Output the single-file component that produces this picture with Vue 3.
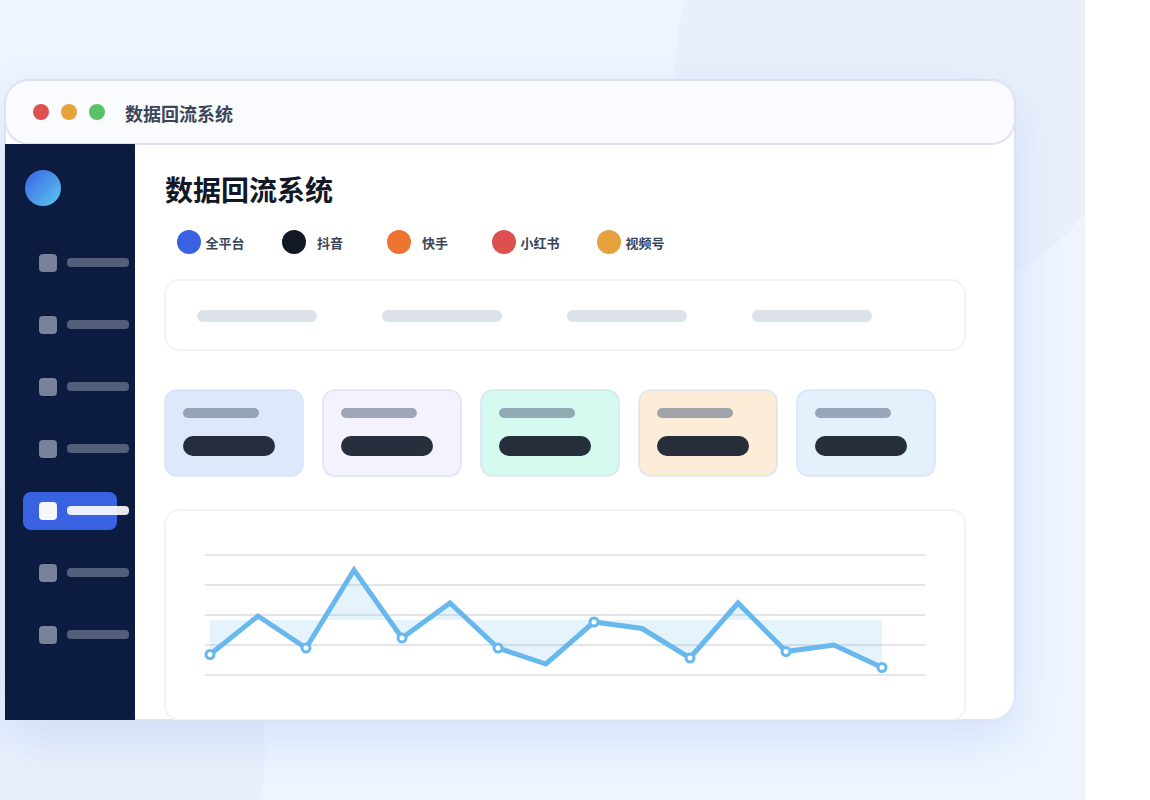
<script setup>
const windowDots = ['#dc5150', '#e8a23c', '#5ac168']
const navItems = Array.from({ length: 7 }, (_, i) => ({ id: i, active: i === 4 }))
const platforms = [
  { name: '全平台', color: '#3962e3' },
  { name: '抖音', color: '#121824' },
  { name: '快手', color: '#ec7330' },
  { name: '小红书', color: '#dc5150' },
  { name: '视频号', color: '#e5a23c' },
]
const cards = ['blue', 'violet', 'mint', 'orange', 'sky']
const gridLines = [45, 75, 105, 135, 165]
const values = [144.5, 106, 138, 60, 128, 93, 138, 154, 112, 118.5, 148, 93, 141.5, 135, 157.5]
const points = values.map((y, i) => ({ x: 45 + i * 48, y }))
const line = points.map((p) => `${p.x},${p.y}`).join(' ')
const area = `45,110 ${line} 717,110`
const markers = points.filter((_, i) => i % 2 === 0)
</script>

<template>
  <div class="stage">
    <div class="glow glow-top"></div>
    <div class="glow glow-bottom"></div>
    <div class="window">
      <header class="titlebar">
        <div class="dots">
          <span v-for="c in windowDots" :key="c" class="dot" :style="{ background: c }"></span>
        </div>
        <span class="window-title">数据回流系统</span>
      </header>
      <div class="body">
        <nav class="sidebar" aria-label="主导航">
          <div class="logo"></div>
          <ul class="nav">
            <li v-for="item in navItems" :key="item.id">
              <a href="#" class="nav-item" :class="{ active: item.active }">
                <span class="nav-icon"></span>
                <span class="nav-bar"></span>
              </a>
            </li>
          </ul>
        </nav>
        <main class="content">
          <h1>数据回流系统</h1>
          <div class="platforms">
            <button v-for="p in platforms" :key="p.name" type="button" class="platform">
              <span class="platform-dot" :style="{ background: p.color }"></span>
              <span class="platform-name">{{ p.name }}</span>
            </button>
          </div>
          <section class="panel filters">
            <span v-for="n in 4" :key="n" class="filter"></span>
          </section>
          <section class="cards">
            <div v-for="tone in cards" :key="tone" class="card" :class="tone">
              <span class="card-label"></span>
              <span class="card-value"></span>
            </div>
          </section>
          <section class="panel chart">
            <svg viewBox="0 0 800 210">
              <line v-for="y in gridLines" :key="y" x1="40" x2="760" :y1="y" :y2="y" class="grid" />
              <polygon :points="area" class="area" />
              <polyline :points="line" class="line" />
              <circle v-for="m in markers" :key="m.x" :cx="m.x" :cy="m.y" r="4" class="marker" />
            </svg>
          </section>
        </main>
      </div>
    </div>
  </div>
</template>

<style>
body {
  margin: 0;
  background: #fff;
}
</style>

<style scoped>
.stage {
  position: relative;
  box-sizing: border-box;
  min-height: 100vh;
  margin-right: 65px;
  padding: 80px 70px 80px 5px;
  overflow: hidden;
  background: #eef5ff;
  font-family: "Noto Sans CJK SC", "Noto Sans", sans-serif;
}
.glow {
  position: absolute;
  border-radius: 50%;
  background: #e9f0fc;
}
.glow-top {
  top: -160px;
  right: -50px;
  width: 460px;
  height: 460px;
}
.glow-bottom {
  top: 490px;
  left: -255px;
  width: 520px;
  height: 520px;
}
.window {
  position: relative;
  border-radius: 24px;
  background: #fff;
  box-shadow: 0 0 0 1px #dbe2f4, inset 0 0 0 1px #dbe2f4, 0 18px 48px rgba(57, 98, 227, 0.14);
}
.titlebar {
  display: flex;
  align-items: center;
  gap: 20px;
  height: 64px;
  padding-left: 28px;
  border-radius: 24px;
  background: #fafbff;
  box-shadow: 0 0 0 1px #dce1f0, inset 0 0 0 1px #dce1f0;
}
.dots {
  display: flex;
  gap: 12px;
}
.dot {
  width: 16px;
  height: 16px;
  border-radius: 50%;
}
.window-title {
  padding-top: 2px;
  color: #3b465a;
  font-size: 18px;
  font-weight: 600;
  line-height: 24px;
}
.body {
  display: flex;
}
.sidebar {
  position: relative;
  flex: none;
  box-sizing: border-box;
  width: 130px;
  padding: 26px 18px;
  background: #0c1b40;
}
.logo {
  width: 36px;
  height: 36px;
  margin-left: 2px;
  border-radius: 50%;
  background: linear-gradient(135deg, #3962e3, #5cc8f0);
}
.nav {
  display: flex;
  flex-direction: column;
  gap: 24px;
  margin: 38px 0 0;
  padding: 0;
  list-style: none;
}
.nav-item {
  display: flex;
  align-items: center;
  gap: 10px;
  height: 38px;
  padding-left: 16px;
  border-radius: 8px;
}
.nav-icon,
.nav-bar {
  flex: none;
  border-radius: 4px;
  background: #78829b;
}
.nav-icon {
  width: 18px;
  height: 18px;
}
.nav-bar {
  width: 62px;
  height: 9px;
  margin-bottom: 1px;
  background: #535e7a;
}
.active {
  background: #3962e3;
}
.active .nav-icon {
  background: #f5f7fd;
}
.active .nav-bar {
  background: rgba(255, 255, 255, 0.9);
}
.content {
  flex: 1;
  min-width: 0;
  padding: 26px 50px 0 30px;
  overflow: hidden;
  border-bottom-right-radius: 24px;
}
h1 {
  margin: 0;
  color: #111827;
  font-size: 28px;
  font-weight: 700;
  line-height: 38px;
}
.platforms {
  display: flex;
  gap: 33px;
  margin: 22px 0 0 12px;
}
.platform {
  display: flex;
  align-items: center;
  padding: 0;
  border: 0;
  background: none;
  font-family: inherit;
}
.platform-dot {
  width: 24px;
  height: 24px;
  border-radius: 50%;
}
.platform-name {
  width: 48px;
  padding-top: 2px;
  color: #3b465a;
  font-size: 13px;
  font-weight: 600;
  line-height: 20px;
  text-align: center;
}
.panel {
  border-radius: 14px;
  background: #fff;
  box-shadow: 0 0 0 1px #f1f2f5, inset 0 0 0 1px #f1f2f5;
}
.filters {
  display: flex;
  gap: 65px;
  margin-top: 26px;
  padding: 30px 32px 28px;
}
.filter {
  width: 120px;
  height: 12px;
  border-radius: 6px;
  background: #dbe2e9;
}
.cards {
  display: grid;
  grid-template-columns: repeat(5, 1fr);
  gap: 20px;
  margin: 40px 30px 0 0;
}
.card {
  display: flex;
  flex-direction: column;
  gap: 18px;
  padding: 18px 18px 20px;
  border-radius: 12px;
  box-shadow: 0 0 0 1px rgba(200, 217, 242, 0.5), inset 0 0 0 1px rgba(200, 217, 242, 0.5);
}
.card-label {
  width: 76px;
  height: 10px;
  border-radius: 5px;
  background: rgba(100, 116, 139, 0.6);
}
.card-value {
  width: 92px;
  height: 20px;
  border-radius: 10px;
  background: rgba(17, 24, 39, 0.9);
}
.blue {
  background: #dde9fb;
}
.violet {
  background: #f4f2fd;
}
.mint {
  background: #d6f9f0;
}
.orange {
  background: #fcedd9;
}
.sky {
  background: #e3f1fd;
}
.chart {
  margin-top: 34px;
}
.chart svg {
  display: block;
  width: 100%;
}
.grid {
  stroke: #e4e5e9;
  stroke-width: 2;
}
.area {
  fill: rgba(103, 184, 238, 0.17);
}
.line {
  fill: none;
  stroke: #68b8ed;
  stroke-width: 5;
}
.marker {
  fill: #fff;
  stroke: #68b8ed;
  stroke-width: 3;
}
</style>
